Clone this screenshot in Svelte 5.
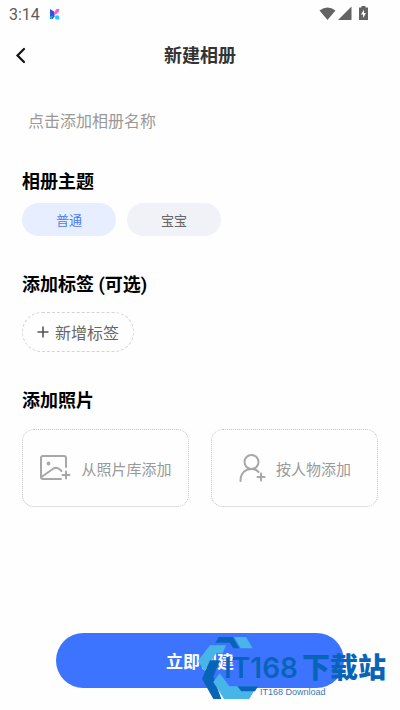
<script>
    let albumName = $state("");
    let theme = $state("普通");

    const themes = ["普通", "宝宝"];
</script>

<div class="page">
    <div class="status">
        <span class="time">3:14</span>
        <svg class="app-mark" width="12" height="13" viewBox="0 0 12 13">
            <path d="M1 1 L5 3.500 V7 L6 8 L3.500 11 H1 Z" fill="#2c55dc" />
            <path d="M5 4.500 L7.500 1 H10.500 L9.500 4.500 L5 7.500 Z" fill="#ee62dc" />
            <path d="M1 8 L4 8 L3 11 H1 Z" fill="#2b9af5" />
            <circle cx="8.200" cy="9.500" r="2.200" fill="#21cdf5" />
        </svg>
        <svg class="signals" width="50" height="16" viewBox="0 0 50 16">
            <path d="M0.500 4.500 Q8.500 -1.500 16.500 4.500 L8.500 14 Z" fill="#636363" />
            <path d="M32.500 0.500 V14 H19 Z" fill="#636363" />
            <path d="M42.500 1.500 V0 H46.500 V1.500 H49 V14 H40 V1.500 Z" fill="#636363" />
            <path d="M45 3.500 L42 8.500 H44 V12 L47 7 H45 Z" fill="#fff" />
        </svg>
    </div>

    <header>
        <button class="back" aria-label="返回">
            <svg width="12" height="18" viewBox="0 0 12 18">
                <path d="M10 2 L3.500 8.500 L10 15" fill="none" stroke="#111" stroke-width="2.200" stroke-linecap="round" />
            </svg>
        </button>
        <h1>新建相册</h1>
    </header>

    <main>
        <input
            class="name"
            type="text"
            bind:value={albumName}
            placeholder="点击添加相册名称"
            aria-label="相册名称"
        />

        <section>
            <h2>相册主题</h2>
            <div class="themes">
                {#each themes as item}
                    <button
                        class="theme"
                        class:active={theme === item}
                        onclick={() => (theme = item)}>{item}</button
                    >
                {/each}
            </div>
        </section>

        <section>
            <h2>添加标签 (可选)</h2>
            <button class="tag">
                <svg width="12" height="12" viewBox="0 0 12 12">
                    <path d="M6 0.500 V11.500 M0.500 6 H11.500" stroke="#555" stroke-width="1.600" />
                </svg>
                新增标签
            </button>
        </section>

        <section>
            <h2>添加照片</h2>
            <div class="cards">
                <button class="card">
                    <svg width="32" height="28" viewBox="0 0 32 28" fill="none" stroke="#a6a7a9" stroke-width="2" stroke-linecap="round" stroke-linejoin="round">
                        <path d="M27 13 V4 Q27 2 25 2 H4 Q2 2 2 4 V23 Q2 25 4 25 H22" />
                        <path d="M2.500 23 L14.500 14.500 Q17 12.800 19.500 14.500 L22.500 17" />
                        <circle cx="9.500" cy="9.500" r="1.300" fill="#a6a7a9" stroke-width="1.200" />
                        <path d="M27 17.500 V24.500 M23.500 21 H30.500" />
                    </svg>
                    从照片库添加
                </button>
                <button class="card">
                    <svg width="28" height="30" viewBox="0 0 28 30" fill="none" stroke="#a6a7a9" stroke-width="2" stroke-linecap="round">
                        <circle cx="13.500" cy="9" r="7" />
                        <path d="M2.500 28 C2.500 20.500 7 16 13 16 Q18 16 20.500 19" />
                        <path d="M23 20.500 V27.500 M19.500 24 H26.500" />
                    </svg>
                    按人物添加
                </button>
            </div>
        </section>
    </main>

    <footer>
        <button class="create">立即创建</button>
        <div class="watermark">
            <svg width="72" height="72" viewBox="0 3 216 216">
                <path d="M62 15 H104 L124 49 H106 L95 32 H52 Z" fill="#0864b8" />
                <path d="M108 15 H144 L164 49 H128 Z" fill="#48b5e8" />
                <path d="M36 40 H84 L74 64 H54 L20 118 L0 86 Z" fill="#48b5e8" />
                <path d="M36 85 H66 L46 134 L70 201 H46 L12 140 Z" fill="#0864b8" />
                <path d="M65 124 L94 163 H176 L154 201 H78 L46 150 Z" fill="#48b5e8" />
                <path d="M118 163 H180 L171 178 H130 Z" fill="#0864b8" />
            </svg>
            <div class="words">
                <span class="brand"><span class="latin">IT168</span>下载站</span>
                <span class="small">IT168 Download</span>
            </div>
        </div>
    </footer>
</div>

<style>
    :global(body) {
        background: #fefefe;
    }

    .page {
        display: flex;
        flex-direction: column;
        min-height: 100vh;
        font-family: Roboto, "Noto Sans CJK SC", sans-serif;
        color: #111;
    }

    button {
        padding: 0;
        border: 0;
        background: none;
        font: inherit;
        color: inherit;
        cursor: pointer;
    }

    .status {
        display: flex;
        align-items: center;
        height: 28px;
        padding: 0 31px 0 9px;
        font-size: 16px;
        color: #5c5c5c;
    }

    .app-mark {
        margin-left: 9px;
    }

    .signals {
        margin-left: auto;
    }

    header {
        display: grid;
        grid-template-columns: 40px 1fr 40px;
        align-items: center;
        height: 56px;
    }

    .back {
        display: flex;
        padding-left: 14px;
    }

    h1 {
        margin: 0;
        font-size: 18px;
        font-weight: 700;
        line-height: 26px;
        text-align: center;
        color: #333;
    }

    main {
        display: flex;
        flex-direction: column;
        padding: 17px 22px 24px;
    }

    .name {
        height: 40px;
        padding: 0 6px;
        border: 0;
        outline: none;
        background: none;
        font: inherit;
        font-size: 16px;
        color: #333;
    }

    .name::placeholder {
        color: #999;
        opacity: 1;
    }

    section {
        margin-top: 36px;
    }

    section:first-of-type {
        margin-top: 28px;
    }

    h2 {
        margin: 0 0 8px;
        font-size: 18px;
        font-weight: 700;
        line-height: 26px;
        color: #000;
    }

    .themes {
        display: flex;
        gap: 11px;
    }

    .theme {
        width: 94px;
        height: 33px;
        border-radius: 17px;
        background: #f1f2f8;
        font-size: 13px;
        color: #666;
    }

    .theme.active {
        background: #e7eeff;
        color: #4c7cf5;
    }

    .tag {
        display: flex;
        align-items: center;
        gap: 6px;
        height: 40px;
        margin-top: 14px;
        padding: 0 14px;
        border: 1px dashed #d4d4d4;
        border-radius: 20px;
        font-size: 16px;
        color: #666;
    }

    .cards {
        display: grid;
        grid-template-columns: 1fr 1fr;
        gap: 22px;
        margin-top: 15px;
    }

    .card {
        display: flex;
        align-items: center;
        justify-content: center;
        gap: 10px;
        height: 78px;
        border: 1px dotted #c4c4c6;
        border-radius: 12px;
        font-size: 15px;
        color: #999;
        white-space: nowrap;
    }

    footer {
        position: relative;
        margin-top: auto;
        padding: 0 56px 22px;
    }

    .create {
        display: block;
        width: 100%;
        height: 55px;
        border-radius: 28px;
        background: #3c74ff;
        font-size: 17px;
        font-weight: 700;
        color: #fff;
    }

    .watermark {
        position: absolute;
        top: 0;
        right: 14px;
        display: flex;
        pointer-events: none;
    }

    .words {
        display: flex;
        flex-direction: column;
        margin: 18px 0 0 -46px;
    }

    .brand {
        font-size: 28px;
        font-weight: 900;
        line-height: 34px;
        color: #0864b8;
        white-space: nowrap;
    }

    .latin {
        padding-right: 4px;
        font-family: Inter, sans-serif;
        font-weight: 600;
    }

    .small {
        padding-left: 36px;
        font-family: "Liberation Sans", Arial, sans-serif;
        font-size: 9px;
        line-height: 12px;
        color: #3977bd;
    }
</style>
